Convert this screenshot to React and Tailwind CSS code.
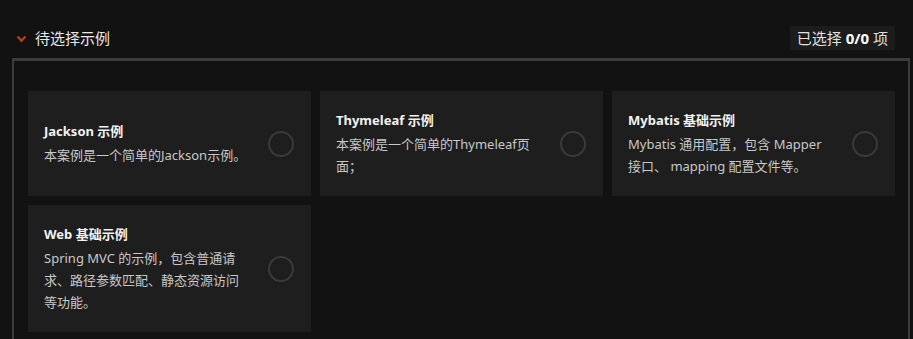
const examples = [
  { title: 'Jackson 示例', desc: '本案例是一个简单的Jackson示例。' },
  { title: 'Thymeleaf 示例', desc: '本案例是一个简单的Thymeleaf页面；' },
  { title: 'Mybatis 基础示例', desc: 'Mybatis 通用配置，包含 Mapper 接口、 mapping 配置文件等。' },
  { title: 'Web 基础示例', desc: 'Spring MVC 的示例，包含普通请求、路径参数匹配、静态资源访问等功能。' },
]

function ExampleCard({ title, desc }) {
  return (
    <div className="flex items-center justify-between bg-[#1e1e1e] pl-4 pr-[17px] py-[19px]">
      <div className="w-[204px]">
        <h3 className="text-[13px] font-bold leading-[20px] text-[#f2f2f2] mb-[3px]">{title}</h3>
        <p className="text-[13px] leading-[22px] text-[#c8c8c8]">{desc}</p>
      </div>
      <div className="w-[26px] h-[26px] rounded-full border-2 border-[#3a3a3a] flex-shrink-0" />
    </div>
  )
}

export default function App() {
  return (
    <div
      className="w-full h-[339px] bg-[#121212] overflow-hidden"
      style={{ fontFamily: '"Noto Sans", "Noto Sans CJK SC", sans-serif' }}
    >
      {/* 标题栏 */}
      <div className="h-[58px] flex items-end justify-between pl-4 pr-[18px] pb-2">
        <div className="flex items-center gap-2 mb-[1px]">
          <svg width="11" height="8" viewBox="0 0 11 8" className="mt-[1px]">
            <path d="M1.5 1.5 L5.5 5.8 L9.5 1.5" fill="none" stroke="#b93f1c" strokeWidth="2.2" />
          </svg>
          <span className="text-[15px] leading-[22px] text-[#e8e8e8]">待选择示例</span>
        </div>
        <div className="h-[24px] flex items-center px-[7px] bg-[#1c1c1c] text-[15px] text-[#e0e0e0]">
          已选择&nbsp;<b className="font-bold text-white">0/0</b>&nbsp;项
        </div>
      </div>

      {/* 卡片区域 */}
      <div className="ml-3 mr-[3px] h-[300px] border-t-[3px] border-x-2 border-[#3b3b3b] pt-[30px] pl-[14px] pr-[13px]">
        <div className="grid grid-cols-3 gap-x-[9px] gap-y-[9px]">
          {examples.map((ex) => (
            <ExampleCard key={ex.title} title={ex.title} desc={ex.desc} />
          ))}
        </div>
      </div>
    </div>
  )
}
